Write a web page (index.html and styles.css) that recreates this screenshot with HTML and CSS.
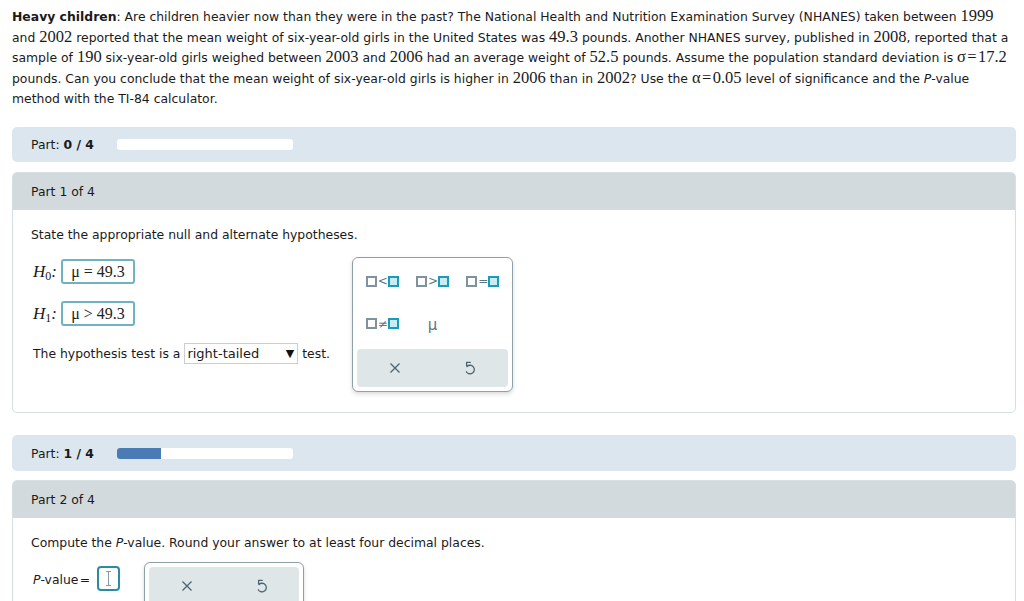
FILE: index.html
```html
<!DOCTYPE html>
<html>
<head>
<meta charset="utf-8">
<link rel="stylesheet" href="styles.css">
</head>
<body>
<div class="page">
  <p class="problem"><b>Heavy children</b>: Are children heavier now than they were in the past? The National Health and Nutrition Examination Survey (NHANES) taken between <span class="num">1999</span> and <span class="num">2002</span> reported that the mean weight of six-year-old girls in the United States was <span class="num">49.3</span> pounds. Another NHANES survey, published in <span class="num">2008</span>, reported that a sample of <span class="num">190</span> six-year-old girls weighed between <span class="num">2003</span> and <span class="num">2006</span> had an average weight of <span class="num">52.5</span> pounds. Assume the population standard deviation is <span class="num">σ&#8202;=&#8202;17.2</span> pounds. Can you conclude that the mean weight of six-year-old girls is higher in <span class="num">2006</span> than in <span class="num">2002</span>? Use the <span class="num">α&#8202;=&#8202;0.05</span> level of significance and the <i>P</i>-value method with the TI-84 calculator.</p>

  <div class="progress">
    <span>Part: <b>0 / 4</b></span>
    <span class="track"><span class="fill" style="width:0%"></span></span>
  </div>

  <section class="part">
    <div class="part-head">Part 1 of 4</div>
    <div class="part-body">
      <p class="prompt">State the appropriate null and alternate hypotheses.</p>
      <div class="work">
        <div class="answers">
          <div class="hyp"><span class="hlabel">H<sub>0</sub>:</span><span class="hbox">μ = 49.3</span></div>
          <div class="hyp"><span class="hlabel">H<sub>1</sub>:</span><span class="hbox">μ &gt; 49.3</span></div>
          <div class="tail"><span>The hypothesis test is a</span><span class="select"><span>right-tailed</span><span class="caret">▼</span></span><span>test.</span></div>
        </div>
        <div class="palette">
          <div class="keys">
            <span class="key"><span class="sq"></span><span class="op">&lt;</span><span class="sq on"></span></span>
            <span class="key"><span class="sq"></span><span class="op">&gt;</span><span class="sq on"></span></span>
            <span class="key"><span class="sq"></span><span class="op">=</span><span class="sq on"></span></span>
            <span class="key"><span class="sq"></span><span class="op">≠</span><span class="sq on"></span></span>
            <span class="key mu">μ</span>
          </div>
          <div class="actions">
            <span class="act"><svg width="14" height="14" viewBox="0 0 14 14"><path d="M2.5 2.5 L11.5 11.5 M11.5 2.5 L2.5 11.5" stroke="#4a6570" stroke-width="1.3" fill="none"/></svg></span>
            <span class="act"><svg width="14" height="16" viewBox="0 0 14 16"><path d="M7.2 2.4 H3.6 V5.8 M4 6.5 A4.3 4.3 0 1 1 3.3 11.7" stroke="#4a6570" stroke-width="1.3" fill="none" stroke-linejoin="round" stroke-linecap="round"/></svg></span>
          </div>
        </div>
      </div>
    </div>
  </section>

  <div class="progress second">
    <span>Part: <b>1 / 4</b></span>
    <span class="track"><span class="fill" style="width:25%"></span></span>
  </div>

  <section class="part">
    <div class="part-head">Part 2 of 4</div>
    <div class="part-body">
      <p class="prompt">Compute the <i>P</i>-value. Round your answer to at least four decimal places.</p>
      <div class="work">
        <div class="pval"><span><i>P</i>-value&#8202;=&#8202;</span><span class="ibox"><span class="ibeam"></span></span></div>
        <div class="palette small">
          <div class="actions">
            <span class="act"><svg width="14" height="14" viewBox="0 0 14 14"><path d="M2.5 2.5 L11.5 11.5 M11.5 2.5 L2.5 11.5" stroke="#4a6570" stroke-width="1.3" fill="none"/></svg></span>
            <span class="act"><svg width="14" height="16" viewBox="0 0 14 16"><path d="M7.2 2.4 H3.6 V5.8 M4 6.5 A4.3 4.3 0 1 1 3.3 11.7" stroke="#4a6570" stroke-width="1.3" fill="none" stroke-linejoin="round" stroke-linecap="round"/></svg></span>
          </div>
        </div>
      </div>
    </div>
  </section>
</div>
</body>
</html>
```

FILE: styles.css
```css
html, body {
  margin: 0;
  padding: 0;
  background: #fff;
}
body {
  font-family: "DejaVu Sans", Verdana, sans-serif;
  font-size: 12.4px;
  color: #1a1a1a;
  overflow: hidden;
}
.page {
  padding: 0 8px 0 12px;
}
.problem {
  margin: 0;
  padding-top: 7px;
  line-height: 20.5px;
  height: 101px;
}
.num {
  font-family: "Liberation Serif", "Times New Roman", serif;
  font-size: 16.5px;
  line-height: 1;
}
.progress {
  margin-top: 19px;
  height: 35px;
  background: #dbe6ef;
  border-radius: 5px;
  display: flex;
  align-items: center;
  padding-left: 19px;
  gap: 23px;
}
.progress.second {
  margin-top: 22px;
  height: 36px;
}
.progress b {
  font-weight: bold;
}
.track {
  width: 176px;
  height: 11px;
  background: #fff;
  border-radius: 3px;
  overflow: hidden;
  display: flex;
}
.fill {
  background: #4a7bb5;
  height: 100%;
}
.part {
  margin-top: 10px;
  border: 1px solid #d5dee2;
  border-radius: 5px;
  overflow: hidden;
}
.progress.second + .part {
  margin-top: 9px;
}
.part-head {
  background: #d3dadd;
  height: 37px;
  display: flex;
  align-items: center;
  padding-left: 18px;
}
.part-body {
  padding: 17px 18px 20px;
}
.prompt {
  margin: 0;
  line-height: 16px;
}
.work {
  display: flex;
  align-items: flex-start;
  gap: 22px;
  margin-top: 14px;
}
.answers {
  width: 299px;
  flex: none;
  padding-top: 2px;
  white-space: nowrap;
}
.hyp {
  display: flex;
  align-items: center;
  gap: 4px;
  height: 25px;
  margin-bottom: 17px;
  padding-left: 2px;
}
.hlabel {
  font-family: "Liberation Serif", "Times New Roman", serif;
  font-style: italic;
  font-size: 17px;
}
.hlabel sub {
  font-style: normal;
  font-size: 12px;
  vertical-align: -3px;
  line-height: 0;
}
.hbox {
  border: 2px solid #6fb3c2;
  border-radius: 3px;
  height: 21px;
  width: 70px;
  display: flex;
  align-items: center;
  justify-content: center;
  font-family: "Liberation Serif", "Times New Roman", serif;
  font-size: 16px;
  color: #222;
  line-height: 21px;
  white-space: pre;
}
.tail {
  display: flex;
  align-items: center;
  gap: 4px;
  margin-top: -1px;
  padding-left: 2px;
}
.select {
  display: inline-flex;
  align-items: center;
  justify-content: space-between;
  width: 108px;
  height: 19px;
  border: 1px solid #c8ced1;
  padding: 0 2px 0 2px;
  margin-top: 1px;
  font-size: 13px;
}
.caret {
  font-size: 11px;
  color: #111;
  padding-right: 1px;
}
.palette {
  width: 151px;
  border: 1px solid #8fa1a8;
  border-radius: 6px;
  padding: 2px 4px 4px;
  box-shadow: 0 2px 4px rgba(0,0,0,0.15);
  background: #fff;
}
.keys {
  display: grid;
  grid-template-columns: repeat(3, 1fr);
  grid-template-rows: 42px 43px;
  margin-bottom: 4px;
}
.key {
  display: flex;
  align-items: center;
  justify-content: center;
  gap: 1px;
}
.sq {
  border: 2px solid #7e939b;
  width: 7px;
  height: 7px;
}
.sq.on {
  border-color: #1d9bb6;
  background: #c8ebf4;
}
.op {
  color: #5d7680;
  font-size: 12px;
  line-height: 1;
  width: 9px;
  text-align: center;
}
.mu {
  color: #5d7680;
  font-size: 15px;
  padding-top: 2px;
}
.actions {
  background: #dfe6e8;
  border-radius: 4px;
  height: 38px;
  display: grid;
  grid-template-columns: 1fr 1fr;
  align-items: center;
  justify-items: center;
}
.act {
  display: flex;
}
.pval {
  display: flex;
  align-items: center;
  padding-left: 2px;
  margin-top: 1px;
}
.pval > span:first-child {
  padding-top: 1px;
}
.ibox {
  width: 19px;
  height: 21px;
  border: 2px solid #2a8ca2;
  border-radius: 4px;
  margin-left: 6px;
  display: flex;
  justify-content: center;
  align-items: center;
}
.ibeam {
  width: 1px;
  height: 15px;
  background: #8a9aa0;
  position: relative;
}
.ibeam::before, .ibeam::after {
  content: "";
  position: absolute;
  left: -2px;
  width: 5px;
  height: 1px;
  background: #8a9aa0;
}
.ibeam::before { top: 0; }
.ibeam::after { bottom: 0; }
.palette.small {
  margin-left: 2px;
  width: 150px;
  padding-top: 4px;
  margin-top: -3px;
  height: 60px;
}
```
